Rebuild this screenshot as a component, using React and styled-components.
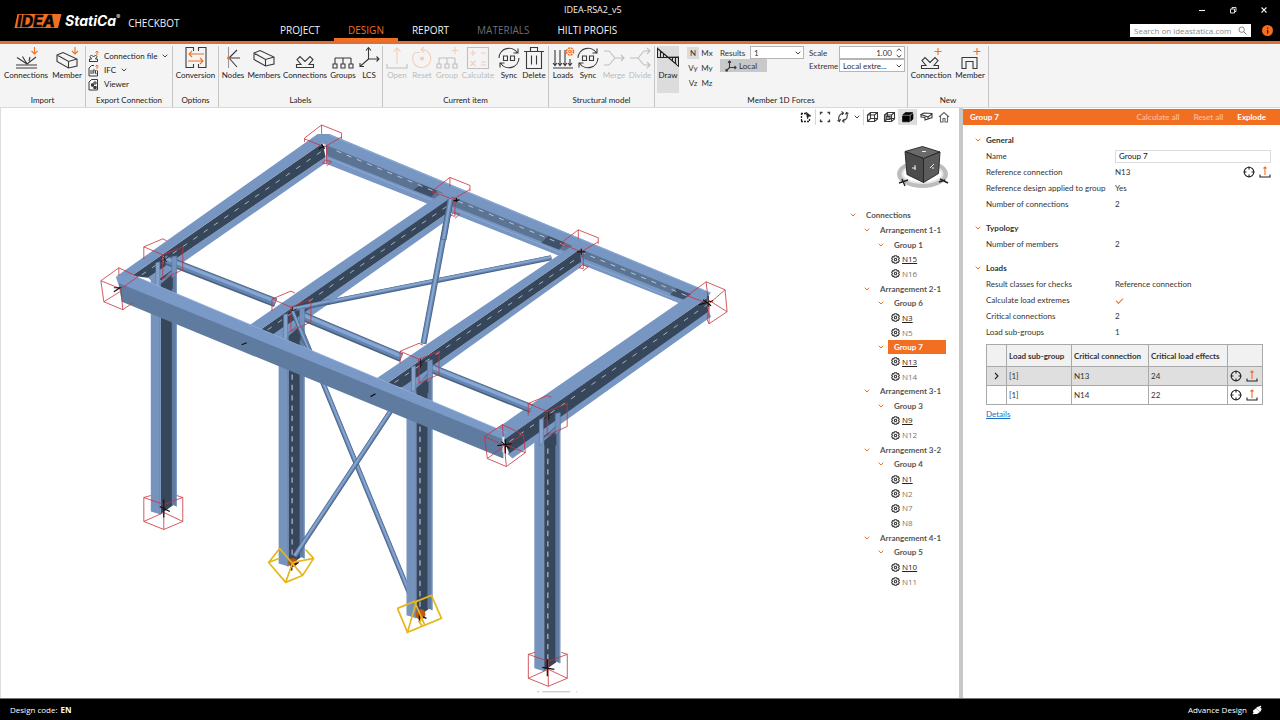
import React from "react";
import styled, { createGlobalStyle } from "styled-components";

const ORANGE = "#f26f21";

const GlobalStyle = createGlobalStyle`
  * {
    box-sizing: border-box;
  }
  body {
    margin: 0;
    font-family: Lato, "Open Sans", sans-serif;
    font-size: 8px;
    line-height: 10px;
    color: #333;
    background: #fff;
  }
  button, input, select {
    font: inherit;
    color: inherit;
    margin: 0;
    padding: 0;
    border: 0;
    background: none;
  }
  svg {
    display: block;
    flex: none;
  }
`;

const Page = styled.div`
  min-height: 100vh;
  display: flex;
  flex-direction: column;
`;

/* ---------- header ---------- */

const Header = styled.header`
  display: grid;
  grid-template-columns: 266px 1fr auto;
  grid-template-rows: 19px 22px;
  background: #000;
  color: #f2f2f2;
  border-bottom: 3px solid #dd6f38;
`;

const Brand = styled.div`
  grid-row: 1 / 3;
  display: flex;
  align-items: center;
  padding-left: 14px;
`;

const BrandName = styled.span`
  font: italic 700 14px/18px Inter, sans-serif;
  margin-left: 3px;
  color: #fff;
`;

const Registered = styled.sup`
  font: 400 6px/6px Inter, sans-serif;
  align-self: flex-start;
  margin-top: 14px;
`;

const Product = styled.span`
  font-family: "Open Sans", sans-serif;
  font-size: 10px;
  line-height: 14px;
  margin: 4px 0 0 8px;
`;

const FileTitle = styled.div`
  font-family: "Open Sans", sans-serif;
  font-size: 9px;
  line-height: 19px;
  padding-left: 298px;
`;

const WindowButtons = styled.div`
  display: flex;
  align-items: center;
  justify-content: flex-end;
  gap: 23px;
  padding-right: 12px;
`;

const PlainButton = styled.button`
  display: flex;
  align-items: center;
  justify-content: center;
`;

const Tabs = styled.nav`
  display: flex;
`;

const Tab = styled.button`
  padding: 3px 14px 0;
  font-family: "Open Sans", sans-serif;
  font-size: 10px;
  line-height: 16px;
  border-bottom: 3px solid ${(p) => (p.$active ? ORANGE : "transparent")};
  color: ${(p) => (p.$active ? ORANGE : p.disabled ? "#6e6e6e" : "#f2f2f2")};
`;

const SearchArea = styled.div`
  display: flex;
  align-items: center;
  gap: 11px;
  padding: 0 7px 0 0;
`;

const SearchBox = styled.label`
  display: flex;
  align-items: center;
  width: 121px;
  height: 13px;
  margin-top: 1px;
  padding: 0 4px;
  background: #fff;

  input {
    flex: 1;
    min-width: 0;
    font-family: "Open Sans", sans-serif;
    outline: none;
  }
  input::placeholder {
    color: #8b8b8b;
    opacity: 1;
  }
`;

/* ---------- ribbon ---------- */

const Ribbon = styled.div`
  display: flex;
  height: 64px;
  padding-top: 2px;
  background: #f4f4f4;
  border-bottom: 1px solid #d8d8d8;
`;

const RibbonGroup = styled.section`
  display: flex;
  flex-direction: column;
  justify-content: space-between;
  flex: none;
  width: ${(p) => p.$width}px;
  border-right: 1px solid #c6c6c6;
`;

const GroupCaption = styled.div`
  text-align: center;
  line-height: 14px;
  color: #222;
`;

const ToolRow = styled.div`
  display: flex;
  padding-left: ${(p) => p.$pad || 0}px;
`;

const Tool = styled.button`
  display: flex;
  flex-direction: column;
  align-items: center;
  flex: none;
  width: ${(p) => p.$width}px;
  color: #222;
  white-space: nowrap;
  opacity: ${(p) => (p.disabled ? 0.28 : 1)};
  background: ${(p) => (p.$pressed ? "#dcdcdc" : "none")};
  height: ${(p) => (p.$pressed ? "47px" : "auto")};
`;

const ExportList = styled.div`
  display: flex;
  flex-direction: column;
  padding: 3px 0 0 2px;
`;

const ExportItem = styled.button`
  display: flex;
  align-items: center;
  gap: 5px;
  height: 14px;
  color: #222;
`;

const ForcesRow = styled.div`
  display: flex;
  align-items: flex-start;
  padding-left: 2px;
`;

const ForceToggles = styled.div`
  display: grid;
  grid-template-columns: 12px 16px;
  grid-auto-rows: 12px;
  row-gap: 3px;
  width: 41px;
  padding: 1px 0 0 8px;
`;

const ForceToggle = styled.button`
  line-height: 12px;
  background: ${(p) => (p.$pressed ? "#dcdcdc" : "none")};
`;

const ForceFields = styled.div`
  display: grid;
  grid-template-columns: ${(p) => p.$label}px ${(p) => p.$field}px;
  grid-auto-rows: 13px;
  align-items: center;
`;

const ScaleFields = styled(ForceFields)`
  margin-left: 5px;
`;

const Control = styled.span`
  display: grid;
  align-items: center;
  height: 13px;
  border: 1px solid #b5b5b5;
  background: #fff;

  > * {
    grid-area: 1 / 1;
    min-width: 0;
  }
  select, input {
    width: 100%;
    appearance: none;
    padding-left: 3px;
    line-height: 10px;
  }
  input {
    padding-right: 12px;
    text-align: right;
  }
  svg {
    justify-self: end;
    margin-right: 2px;
    pointer-events: none;
  }
`;

const LocalButton = styled.button`
  grid-column: 1 / 3;
  display: flex;
  align-items: center;
  gap: 2px;
  width: 47px;
  height: 13px;
  padding-left: 5px;
  background: #c8c8c8;
`;

/* ---------- workspace ---------- */

const Workspace = styled.main`
  flex: 1;
  display: flex;
  border-left: 1px solid #ddd;
`;

const Scene = styled.div`
  flex: 1;
  min-width: 0;

  svg {
    width: 100%;
    height: 100%;
  }
`;

const SceneSide = styled.aside`
  flex: none;
  width: 163px;
  display: flex;
  flex-direction: column;
  align-items: flex-start;
`;

const ViewBar = styled.div`
  display: flex;
  align-items: center;
  height: 18px;
`;

const ViewButton = styled(PlainButton)`
  width: ${(p) => p.$width || 17}px;
  height: 16px;
  border-left: ${(p) => (p.$first ? "1px solid #d6d6d6" : "0")};
  background: ${(p) => (p.$pressed ? "#dedede" : "none")};
`;

const CubeBox = styled.div`
  margin: 16px 0 18px 100px;
`;

const Tree = styled.ul`
  list-style: none;
  margin: 0 0 0 51px;
  padding: 0;
  width: 99px;
  height: 381px;
  display: grid;
  grid-auto-rows: 1fr;
`;

const TreeRow = styled.li`
  display: flex;
  align-items: center;
  padding-left: ${(p) => p.$indent}px;
`;

const TreeBranch = styled.button`
  flex: 1;
  margin-left: 4px;
  padding-left: 6px;
  line-height: 14px;
  text-align: left;
  font-weight: 700;
  white-space: nowrap;
  color: ${(p) => (p.$selected ? "#fff" : "#555")};
  background: ${(p) => (p.$selected ? ORANGE : "none")};
`;

const TreeLeaf = styled.button`
  margin-left: 2px;
  font-family: "Open Sans", sans-serif;
  color: ${(p) => (p.$main ? "#222" : "#777")};
  text-decoration: ${(p) => (p.$main ? "underline" : "none")};
`;

/* ---------- properties panel ---------- */

const Panel = styled.aside`
  flex: none;
  width: 321px;
  border-left: 4px solid #c8c8c8;
  padding-top: 1px;
`;

const PanelHeader = styled.div`
  display: flex;
  align-items: center;
  gap: 14px;
  height: 16px;
  padding: 0 14px 0 7px;
  margin-bottom: 1px;
  background: ${ORANGE};
  color: #fff;
  font-weight: 700;

  h2 {
    flex: 1;
    margin: 0;
    font-size: 8px;
  }
  button:disabled {
    color: #fbb58d;
  }
`;

const PanelBody = styled.div`
  display: flex;
  flex-direction: column;
  gap: 8px;
  padding: 6px 9px 0 12px;
`;

const SectionTitle = styled.h3`
  display: flex;
  align-items: center;
  gap: 5px;
  height: 16px;
  margin: 0;
  font-size: 8px;
  font-weight: 700;
`;

const Field = styled.div`
  display: grid;
  grid-template-columns: 129px 1fr auto;
  align-items: center;
  height: 16px;
  padding-left: 11px;
`;

const NameInput = styled.input`
  grid-column: 2 / 4;
  height: 13px;
  padding-left: 3px;
  border: 1px solid #dcdcdc;
  color: #111;
`;

const Actions = styled.span`
  display: flex;
  align-items: center;
  gap: 4px;
`;

const Check = styled.input`
  appearance: none;
  width: 9px;
  height: 9px;
  display: grid;
  place-items: center;

  &:checked::before {
    content: "";
    width: 6px;
    height: 3px;
    border: solid ${ORANGE};
    border-width: 0 0 1px 1px;
    rotate: -45deg;
  }
`;

const LoadTable = styled.table`
  width: 276px;
  margin: 4px 0 4px 11px;
  border-collapse: collapse;
  table-layout: fixed;

  th, td {
    height: 19px;
    padding: 0 2px;
    border: 1px solid #a9a9a9;
    text-align: left;
    white-space: nowrap;
  }
  th {
    height: 22px;
    background: #f1f1f1;
    font-weight: 700;
  }
`;

const LoadRow = styled.tr`
  background: ${(p) => (p.$selected ? "#dfdfdf" : "#fff")};
`;

const DetailsLink = styled.a`
  margin-left: 11px;
  color: #1a6fc4;
`;

const Footer = styled.footer`
  display: flex;
  justify-content: space-between;
  align-items: center;
  height: 22px;
  padding: 0 18px 0 10px;
  background: #000;
  color: #fff;
  font-family: "Open Sans", sans-serif;
  border-top: 1px solid #777;

  span {
    display: flex;
    align-items: center;
    gap: 5px;
  }
  b {
    margin-left: -2px;
  }
`;

/* ---------- icons ---------- */

const Icon = ({ w = 24, h = 24, children, ...rest }) => (
  <svg
    width={w}
    height={h}
    viewBox={`0 0 ${w} ${h}`}
    fill="none"
    stroke="#3a3a3a"
    strokeWidth="1.1"
    aria-hidden="true"
    {...rest}
  >
    {children}
  </svg>
);

const Chevron = ({ color = "#444" }) => (
  <Icon w={6} h={4} stroke={color} strokeWidth="1">
    <path d="M.7 .7 3 3 5.3 .7" />
  </Icon>
);

const box = "M2 9 8 6.5l14 6.5v7l-8.5 2L2 15.5zM2 9l11.5 6.5 8.5-2.5M13.5 15.5V22";
const joint = "M3.5 21.5h17v-3h-4.5l4-5-3-3-5 5-5-5-3 3 4 5h-4.5z";
const groups = "M2 18h4v4H2zM10 18h4v4h-4zM18 18h4v4h-4zM4 18v-6M12 18v-6M20 18v-6M4 12h16";

const icons = {
  importConnections: (
    <Icon>
      <path d="M2 22h21M2 19h21M13 18 3 11.5M13 18 8.5 10.5M13 18l9-7M15 15l1-4" />
      <path d="M20.5 1v7m-3-3 3 3 3-3" stroke={ORANGE} />
    </Icon>
  ),
  importMember: (
    <Icon>
      <path d={box} />
      <path d="M20 1v7m-3-3 3 3 3-3" stroke={ORANGE} />
    </Icon>
  ),
  conversion: (
    <Icon>
      <path d="M9.5 5V1.5H2v20h7.5V18M14.5 5V1.5H22v20h-7.5V18" />
      <path d="M20 8H5m3-3L5 8l3 3M4 15h15m-3-3 3 3-3 3" stroke={ORANGE} />
    </Icon>
  ),
  nodes: (
    <Icon>
      <path d="M7.5 1v21" stroke="#999" />
      <path d="M8 12h11M8 12l8-8M8 12l8 9" />
      <circle cx="7.5" cy="12" r="1.5" fill={ORANGE} stroke="none" />
    </Icon>
  ),
  members: (
    <Icon>
      <path d={box} transform="translate(0 -2)" />
    </Icon>
  ),
  connections: (
    <Icon>
      <path d={joint} />
    </Icon>
  ),
  groups: (
    <Icon>
      <path d={groups} />
    </Icon>
  ),
  lcs: (
    <Icon>
      <path d="M11.5 2v11M11.5 13H22M11.5 13 3 20.5M9 4.5 11.5 1.5 14 4.5M19.5 10.5 22 13l-2.5 2.5M3 17v3.5h4" />
    </Icon>
  ),
  open: (
    <Icon>
      <path d="M2 18v4h20v-4" />
      <path d="M12 18V2M8.5 5.5 12 2l3.5 3.5" stroke={ORANGE} />
    </Icon>
  ),
  reset: (
    <Icon stroke={ORANGE}>
      <path d="M5 6.5A9 9 0 1 0 12 3.5M5 6.5h5M14 1l-3 2.5 3 3" />
      <circle cx="12" cy="12.5" r="1.5" fill={ORANGE} />
    </Icon>
  ),
  group: (
    <Icon>
      <path d={groups} />
      <path d="M20 1v7M16.5 4.5h7" stroke={ORANGE} />
    </Icon>
  ),
  calculate: (
    <Icon>
      <path d="M1.5 1.5h21v21h-21z" />
      <path d="M4 7h6M7 4v6M15 7h5M4.5 15l5 5M9.5 15l-5 5M15 16h5M15 19h5" stroke={ORANGE} />
    </Icon>
  ),
  sync: (
    <Icon>
      <path d="M2 12A10 10 0 0 1 20.5 7M22 12A10 10 0 0 1 3.5 17M21 2.5V7h-4.5M3 21.5V17h4.5" />
      <path d="M6.5 10h4v4.5h-4zM13.5 10h4v4.5h-4z" />
    </Icon>
  ),
  remove: (
    <Icon>
      <path d="M4.5 6v16.5h15V6M2 5.5h20M8.5 5.5v-4h7v4M9.5 9.5v9M14.5 9.5v9" />
    </Icon>
  ),
  loads: (
    <Icon>
      <path d="M2 22h20M4 4v15M9 4v15M14 4v15M19 13v6M2 17l2 2.5L6 17M7 17l2 2.5 2-2.5M12 17l2 2.5 2-2.5M17 17l2 2.5 2-2.5" />
      <g stroke={ORANGE}>
        <circle cx="19" cy="5.5" r="3.5" strokeDasharray="2 .8" strokeWidth="1.6" />
        <circle cx="19" cy="5.5" r="1.3" />
      </g>
    </Icon>
  ),
  merge: (
    <Icon>
      <path d="M2 5h5l6 7h9M2 19h5l6-7M19 9l3 3-3 3" />
    </Icon>
  ),
  divide: (
    <Icon>
      <path d="M2 12h8l6-7h6M10 12l6 7h6M19 2l3 3-3 3M19 16l3 3-3 3" />
    </Icon>
  ),
  draw: (
    <Icon w={22} stroke="#222">
      <path d="M.5 11.5V2.5L21.5 20v-9zM.5 11.5H21.5M3.5 5v6.5M6.5 7.5v4M9.5 10v1.5M12.5 11.5v1M15.5 11.5V15M18.5 11.5v6" />
    </Icon>
  ),
  newConnection: (
    <Icon>
      <path d={joint} transform="translate(-1 1)" />
      <path d="M19 2v7M15.5 5.5h7" stroke={ORANGE} />
    </Icon>
  ),
  newMember: (
    <Icon>
      <path d="M4 22.5v-11h15v11h-4v-7H8v7z" />
      <path d="M19 2v7M15.5 5.5h7" stroke={ORANGE} />
    </Icon>
  ),
  axes: (
    <Icon w={12} h={12}>
      <path d="M4.5 1v6.5H11M4.5 7.5 1 11M3 2.5 4.5 1 6 2.5M9.5 6 11 7.5 9.5 9M1 9v2h2" />
    </Icon>
  ),
  exportConnection: (
    <Icon w={11} h={13} strokeWidth="1">
      <path d="M1 11.5h8.5M1.5 9h2L2 6.5 3.5 5l2 2 2-2L9 6.5 7.5 9h2v2.5M1.5 9v2.5" />
      <path d="M9 5V1M7.5 2.5 9 1l1.5 1.5" stroke={ORANGE} />
    </Icon>
  ),
  exportIfc: (
    <Icon w={11} h={13} strokeWidth="1">
      <path d="M6 1.5H3.5L1 4v8h8.5V6.5M3 6v4M5 10V6h2M5 8h1.5M8.5 6.5h-1v3h1" />
      <path d="M9 5V1M7.5 2.5 9 1l1.5 1.5" stroke={ORANGE} />
    </Icon>
  ),
  viewer: (
    <Icon w={11} h={13} strokeWidth="1">
      <path d="M3.5 1.5H9.5V12H1V4zM3.5 6h2v2h-2zM6 4h2v2H6zM6 8.5h2v2H6z" />
      <path d="M3.5 6h2v2h-2zM6 8.5h2v2H6z" fill="#3a3a3a" />
    </Icon>
  ),
  target: (
    <Icon w={12} h={12} stroke="#222">
      <circle cx="6" cy="6" r="4.8" />
      <path d="M6 .5v3M6 8.5v3M.5 6h3M8.5 6h3" />
    </Icon>
  ),
  upload: (
    <Icon w={12} h={12} stroke="#222">
      <path d="M1 8.5V11h10V8.5" />
      <path d="M6 9V1M4.5 2.5 6 1l1.5 1.5" stroke={ORANGE} />
    </Icon>
  ),
  gear: (
    <Icon w={9} h={9} strokeWidth="1.1">
      <path d="M3.4 .7h2.2l.4 1.2 1.3-.2 1 1.8-.8 1 .8 1-1 1.8-1.3-.2-.4 1.2H3.4L3 7.1l-1.3.2-1-1.8.8-1-.8-1 1-1.8L3 1.900z" />
      <circle cx="4.5" cy="4.5" r="1.2" />
    </Icon>
  ),
};

const wireCube = "M1.5 4 4.5 1.5h7V8l-3 2.5h-7zM1.5 4h7v6.5M8.5 4l3-2.5M4.5 1.5V7.5h7M4.5 7.5l-3 3";

/* ---------- 3D scene ---------- */

const Tube = ({ c: [x1, y1, x2, y2, w] }) => (
  <g>
    <path d={`M${x1} ${y1}L${x2} ${y2}`} stroke="#4b617f" strokeWidth={w} />
    <path d={`M${x1} ${y1 - 0.5}L${x2} ${y2 - 0.5}`} stroke="#6585b1" strokeWidth={w * 0.75} />
    <path d={`M${x1} ${y1 - w / 6}L${x2} ${y2 - w / 6}`} stroke="#86a7d4" strokeWidth={w * 0.35} />
  </g>
);

const purlins = [
  [163, 259, 276, 303, 9],
  [302, 316, 402, 358, 9],
  [430, 368, 532, 409, 9],
];

// bottom and top are the y of the light flange, axis marks a drawn centre line
const columns = [
  { x: 151, bottom: 512, top: 262, axis: false },
  { x: 279, bottom: 564, top: 314, axis: true },
  { x: 407, bottom: 616, top: 366, axis: true },
  { x: 535, bottom: 669, top: 419, axis: true },
];

const Column = ({ x, bottom, top, axis }) => (
  <g>
    <path d={`M${x} ${top + 18}H${x + 10}V${bottom + 3}L${x} ${bottom}z`} fill="#7593bd" />
    <path d={`M${x + 9} ${top + 4}H${x + 22}V${bottom - 6}L${x + 9} ${bottom + 3}z`} fill="#37475b" />
    <path d={`M${x + 21} ${top - 4}H${x + 26}V${bottom - 5}L${x + 21} ${bottom - 7}z`} fill="#5f7ba2" />
    <path d={`M${x + 25.5} ${top - 4}V${bottom - 5}`} stroke="#7d9ac4" />
    <path d={`M${x + 9.5} ${top + 18}V${bottom + 3}`} stroke="#91aedb" />
    {axis && (
      <path d={`M${x + 13.5} ${top + 30}V${bottom - 3}`} stroke="#9dacbd" strokeWidth="1.4" strokeDasharray="5.3 5" />
    )}
  </g>
);

const ColumnPlates = ({ x, top }) => (
  <g>
    <path d={`M${x + 10} ${top + 20}l12-13v20h-12z`} fill="#37475b" />
    <path d={`M${x + 9} ${top + 20}l13-12v4l-13 11z`} fill="#6d8ab4" />
    <path d={`M${x + 5} ${top + 1}l4-1v24l-4 3z`} fill="#86a3cd" stroke="#5b759a" strokeWidth=".6" />
    <path d={`M${x + 21} ${top - 5}l5-1v18l-5 4z`} fill="#7592bc" stroke="#5b759a" strokeWidth=".6" />
    <path d={`M${x + 10} ${top}l8-5M${x + 12} ${top - 5}l4 5M${x + 14} ${top - 7}v9`} stroke="#222" />
  </g>
);

const rafters = [
  {
    top: "116,277 318,134 330,136 323,143 132,276",
    web: "132,276 323,143 326,157 148,278",
    low: "148,278 326,157 326,163 154,283",
    axis: "M142 275 324 150",
  },
  {
    top: "246,328 443,193 456,193 451,198 258,332",
    web: "258,332 450,197 451,211 273,335",
    low: "273,335 451,211 451,218 281,338",
    axis: "M268 330 451 204",
  },
  {
    top: "375,380 573,246 586,246 580,250 387,384",
    web: "387,384 580,250 582,262 402,388",
    low: "402,388 582,262 582,267 409,391",
    axis: "M395 383 580 257",
  },
  {
    top: "497,429 697,291 711,294 708,298 505,440",
    web: "504,440 708,298 709,312 510,454",
    low: "508,454 709,311 712,317 513,459",
    axis: "M510 442 708 305",
  },
];

const Rafter = ({ top, web, low, axis }) => (
  <g>
    <polygon points={low} fill="#7896c2" />
    <polygon points={web} fill="#37475b" />
    <polygon points={top} fill="#7896c2" />
    <path d={axis} stroke="#c3cdd8" strokeWidth=".8" strokeDasharray="5 7.5" />
  </g>
);

const Model = () => (
  <svg viewBox="1 108 796 590" preserveAspectRatio="xMinYMin meet" fill="none" role="img" aria-label="Steel frame">
    <polygon points="326,145 690,292 684,305 327,164" fill="#7896c2" />
    <polygon points="326,143 693,293 690,301 328,156" fill="#5c7494" />
    <path d="M422 184 438 190 432 197 414 190zM550 235 566 242 560 250 542 243zM678 288 694 294 688 301 671 295z" fill="#3f5169" />
    <polygon points="318,134 330,134 712,293 703,299 324,144" fill="#7896c2" />
    <path d="M330 135 711 293M328 158 685 303" stroke="#91aedb" strokeWidth=".8" />
    <path d="M337 151 690 297" stroke="#c3cdd8" strokeWidth=".9" strokeDasharray="5 6" />

    {/* braces run behind the third column and in front of the second */}
    {columns.slice(0, 2).map((c) => (
      <Column key={c.x} {...c} />
    ))}
    <Tube c={[294, 312, 410, 594, 5]} />
    <Tube c={[295, 557, 416, 374, 5]} />
    {columns.slice(2).map((c) => (
      <Column key={c.x} {...c} />
    ))}

    <Tube c={[292, 310, 552, 258, 5]} />
    <Tube c={[451, 200, 424, 344, 6]} />
    {rafters.map((r) => (
      <Rafter key={r.axis} {...r} />
    ))}
    <Tube c={[451, 200, 444, 240, 6]} />
    <Tube c={[292, 310, 330, 302, 5]} />
    {purlins.map((c) => (
      <Tube key={c[0]} c={c} />
    ))}
    {columns.map((c) => (
      <ColumnPlates key={c.x} {...c} />
    ))}
    <Tube c={[293, 312, 309, 350, 4]} />

    <polygon points="118,281 504,439 504,459 122,302" fill="#5f7b9f" />
    <polygon points="116,277 132,275 507,433 504,440 118,283" fill="#7a99c6" />
    <path d="M132 275 507 433" stroke="#91aedb" strokeWidth=".8" />
    <path d="M504 437v16" stroke="#dce6f2" strokeWidth="2" />

    {/* joint boxes */}
    <g stroke="#c9303a" strokeWidth=".8">
      {[0, 1, 2].map((i) => (
        <path
          key={i}
          transform={`translate(${i * 128.5} ${i * 52.5})`}
          d="M305 142v-4l17-13 20 8v6M322 125v9M305 139l20 8 17-10M327 146v18l-4-1 3-3 6 2-5 4"
        />
      ))}
      {[0, 1, 2, 3].map((i) => (
        <path
          key={i}
          transform={`translate(${i * 128.3} ${i * 52.3})`}
          d="M144 259v-12l19-8 4 2M144 247l19 8 20-8v23l-20 9v-24"
        />
      ))}
      {[0, 385].map((x) => (
        <path
          key={x}
          transform={`translate(${x} ${x ? 157 : 0})`}
          d="M151 496l-7 2v24l20 8 19-8v-24l-6-2M144 498l20 7 19-7M164 505v25M144 522l20-9 19 9"
        />
      ))}
      <path d="M119 268 101 281l3 21 19 8M101 281l20 8 17-12-19-9v8M121 289l2 21 10-7M104 302l16-10" />
      <path d="M707 282l-19 14 22 8 16-14zM726 290l2 22-18 12M710 304v20M707 282l2 18 19 12M710 304l-2 16 2 4" />
      <path d="M503 425 485 437l3 22 19 8 19-14-2-18zM485 437l20 9 19-11M505 446l2 21M503 425l1 12M488 459l16-12M526 453l-20-8" />
    </g>

    <g stroke="#111" strokeWidth="1.2">
      <path d="M319 149l6-3M322 145l3 4M454 201l6-1M457 198v4M578 252l8 0M582 249v6M700 305l14-4M704 300l8 6M709 296v11" />
      <path d="M498 446l14-2M502 442l8 7M506 440v14M114 288h6l-6 4M242 345l5-2M371 397l5-3" />
      <path d="M164 500v18M160 507l10 5M548 660v17M543 668l12 2" />
    </g>

    <g>
      <circle cx="293" cy="563" r="4.5" fill="#b4541b" />
      <circle cx="421" cy="615" r="5" fill="#c25a17" />
      <path d="M292 562v9M294 566l5-3M420 614v9M422 617l5 2" stroke="#111" strokeWidth="1.5" />
    </g>
    <g stroke="#e5b71b" strokeWidth="1.7">
      <path d="M280 549 269 563l17 20 17-7 11-17-8-9M280 549l23 27M269 563l10-4M314 559l-21 4-7 20" />
      <path d="M398 609 415 602 425 625M417 602 432 596l10 23-34 14zM398 609 408 633M423 617l-3 6 3 4" />
    </g>
    <path d="M538 692.5h2M543 692.5h28M577 692.5h1" stroke="#bbb" />
  </svg>
);

const ViewCube = () => (
  <svg width="54" height="48" viewBox="896 142 54 48" fill="none" role="img" aria-label="View cube">
    <ellipse cx="922.5" cy="174" rx="23" ry="11.5" stroke="#bdbdbd" strokeWidth="5" />
    <ellipse cx="922.5" cy="174" rx="20" ry="9" stroke="#e6e6e6" strokeWidth="2" />
    <g stroke="#222" strokeWidth=".9">
      <path d="M905 151.5 922.5 146.5 940 152 923.5 158.5z" fill="#6a6a6a" />
      <path d="M905 151.5 923.5 158.5V182.5L907 174.5z" fill="#4c4c4c" />
      <path d="M940 152 923.5 158.5V182.5L938.5 173.5z" fill="#5b5b5b" />
    </g>
    <path d="M912 168h4M915 165v5M930 168l4-4M932 168h2M922 151.5h4" stroke="#eee" />
    <path d="M899 183l9-3M902 179l3 7M940 179l8 4M939 182l6-2" stroke="#222" strokeWidth="1.4" />
  </svg>
);

/* ---------- data ---------- */

const tree = [
  { level: 0, label: "Connections" },
  { level: 1, label: "Arrangement 1-1" },
  { level: 2, label: "Group 1" },
  { label: "N15", main: true },
  { label: "N16" },
  { level: 1, label: "Arrangement 2-1" },
  { level: 2, label: "Group 6" },
  { label: "N3", main: true },
  { label: "N5" },
  { level: 2, label: "Group 7", selected: true },
  { label: "N13", main: true },
  { label: "N14" },
  { level: 1, label: "Arrangement 3-1" },
  { level: 2, label: "Group 3" },
  { label: "N9", main: true },
  { label: "N12" },
  { level: 1, label: "Arrangement 3-2" },
  { level: 2, label: "Group 4" },
  { label: "N1", main: true },
  { label: "N2" },
  { label: "N7" },
  { label: "N8" },
  { level: 1, label: "Arrangement 4-1" },
  { level: 2, label: "Group 5" },
  { label: "N10", main: true },
  { label: "N11" },
];

const middleGroups = [
  {
    caption: "Labels",
    width: 164,
    pad: 2,
    tools: [
      ["Nodes", "nodes", 24],
      ["Members", "members", 38],
      ["Connections", "connections", 44],
      ["Groups", "groups", 32],
      ["LCS", "lcs", 20],
    ],
  },
  {
    caption: "Current item",
    width: 166,
    pad: 2,
    tools: [
      ["Open", "open", 24, true],
      ["Reset", "reset", 26, true],
      ["Group", "group", 24, true],
      ["Calculate", "calculate", 38, true],
      ["Sync", "sync", 24],
      ["Delete", "remove", 26],
    ],
  },
  {
    caption: "Structural model",
    width: 106,
    pad: 2,
    tools: [
      ["Loads", "loads", 24],
      ["Sync", "sync", 26],
      ["Merge", "merge", 26, true],
      ["Divide", "divide", 26, true],
    ],
  },
];

const ToolGroup = ({ caption, width, pad, tools }) => (
  <RibbonGroup $width={width}>
    <ToolRow $pad={pad}>
      {tools.map(([label, icon, w, disabled]) => (
        <Tool key={label} $width={w} disabled={disabled}>
          {icons[icon]}
          {label}
        </Tool>
      ))}
    </ToolRow>
    <GroupCaption>{caption}</GroupCaption>
  </RibbonGroup>
);

const MemberForces = () => (
  <RibbonGroup $width={253}>
    <ForcesRow>
      <Tool $width={22} $pressed>
        {icons.draw}
        Draw
      </Tool>
      <ForceToggles>
        {["N", "Mx", "Vy", "My", "Vz", "Mz"].map((f) => (
          <ForceToggle key={f} $pressed={f === "N"}>
            {f}
          </ForceToggle>
        ))}
      </ForceToggles>
      <ForceFields $label={30} $field={54}>
        <label htmlFor="results">Results</label>
        <Control>
          <select id="results">
            <option>1</option>
          </select>
          <Chevron />
        </Control>
        <LocalButton>
          {icons.axes}
          Local
        </LocalButton>
      </ForceFields>
      <ScaleFields $label={30} $field={66}>
        <label htmlFor="scale">Scale</label>
        <Control>
          <input id="scale" defaultValue="1.00" />
          <Icon w={6} h={10} strokeWidth="1">
            <path d="M.7 3 3 .8 5.3 3M.7 7 3 9.2 5.3 7" />
          </Icon>
        </Control>
        <label htmlFor="extreme">Extreme</label>
        <Control>
          <select id="extreme">
            <option>Local extre...</option>
          </select>
          <Chevron />
        </Control>
      </ScaleFields>
    </ForcesRow>
    <GroupCaption>Member 1D Forces</GroupCaption>
  </RibbonGroup>
);

const viewButtons = [
  {
    name: "Select",
    width: 19,
    icon: (
      <Icon w={12} h={12} stroke="#222">
        <path d="M1 2.5h5M1.5 2v9M1 10.5h9M9.5 8v3" strokeDasharray="2 1" strokeWidth="1.3" />
        <path d="M6 1l5 4-2.5.5L7.5 8z" fill="#222" strokeWidth=".5" />
      </Icon>
    ),
  },
  {
    name: "Zoom to fit",
    width: 19,
    first: true,
    icon: (
      <Icon w={12} h={12}>
        <path d="M1.5 3.5V1.5H3.5M8.500 1.5h2V3.500M10.5 8.500v2H8.500M3.500 10.5H1.5V8.500" strokeWidth="1.3" />
      </Icon>
    ),
  },
  {
    name: "Rotate",
    width: 17,
    icon: (
      <Icon w={12} h={12}>
        <path d="M2.5 10.500C.5 7 2 3 6.500 2M4.500.5 6.500 2 5 4M.5 9.500l2 1 1-2.500M9.500 1.500c2 3.500.5 7.500-4 8.500M7.500 8 5.500 10l2 1.500M8.500 3.500l1-2 2 1" />
      </Icon>
    ),
  },
  { name: "More", width: 12, icon: <Chevron /> },
  {
    name: "Wireframe",
    width: 18,
    first: true,
    icon: (
      <Icon w={13} h={12}>
        <path d={wireCube} />
      </Icon>
    ),
  },
  {
    name: "Transparent",
    width: 17,
    icon: (
      <Icon w={13} h={12}>
        <path d={wireCube} />
        <path d="M3 5.5h4v3H3z" fill="#999" />
      </Icon>
    ),
  },
  {
    name: "Solid",
    width: 18,
    pressed: true,
    icon: (
      <Icon w={13} h={12} stroke="#000" strokeWidth=".6">
        <path d="M1.5 4.8h7v6h-7zM1.8 3.7l2.7-2.2h7.2L9 3.7zM9.7 4.5l2.3-2V8l-2.3 2.3z" fill="#000" />
      </Icon>
    ),
  },
  {
    name: "Members",
    width: 20,
    first: true,
    icon: (
      <Icon w={13} h={12}>
        <path d="M1 3.5 4 2l8 .5v4L8 8V6zM1 3.5V6l4 .5V9l3-1M1 3.5 8 6l4-3" />
      </Icon>
    ),
  },
  {
    name: "Home",
    width: 16,
    icon: (
      <Icon w={12} h={12} stroke="#666">
        <path d="M1 6l5-4.5L11 6M2.5 5v6H5V7.5h2V11h2.5V5" />
      </Icon>
    ),
  },
];

const loadRows = [
  { group: "[1]", connection: "N13", effects: 24, selected: true },
  { group: "[1]", connection: "N14", effects: 22 },
];

const GoActions = () => (
  <Actions>
    <PlainButton aria-label="Locate">{icons.target}</PlainButton>
    <PlainButton aria-label="Open">{icons.upload}</PlainButton>
  </Actions>
);

const Title = ({ children }) => (
  <SectionTitle>
    <Chevron color={ORANGE} />
    {children}
  </SectionTitle>
);

const Text = ({ label, value, children }) => (
  <Field>
    <span>{label}</span>
    <span>{value}</span>
    {children}
  </Field>
);

const App = () => (
  <Page>
    <GlobalStyle />
    <Header>
      <Brand>
        <svg width="48" height="24" viewBox="0 -4 48 24" role="img" aria-label="IDEA">
          <path d="M3.5 1H47.5L44 15H.5z" fill={ORANGE} />
          <text
            x="3"
            y="14"
            fontFamily="Inter, sans-serif"
            fontStyle="italic"
            fontWeight="700"
            fontSize="16"
            fill="#000"
            stroke="#000"
            strokeWidth=".6"
          >
            IDEA
          </text>
        </svg>
        <BrandName>StatiCa</BrandName>
        <Registered>®</Registered>
        <Product>CHECKBOT</Product>
      </Brand>
      <FileTitle>IDEA-RSA2_v5</FileTitle>
      <WindowButtons>
        <PlainButton aria-label="Minimize">
          <Icon w={8} h={8} stroke="#eee">
            <path d="M1 4.5h6" />
          </Icon>
        </PlainButton>
        <PlainButton aria-label="Restore">
          <Icon w={8} h={8} stroke="#eee">
            <path d="M1.5 3h4v4h-4zM3 3V1.5h4v4H5.5" strokeWidth=".9" />
          </Icon>
        </PlainButton>
        <PlainButton aria-label="Close">
          <Icon w={8} h={8} stroke="#eee">
            <path d="M1.5 1.5l5 5M6.5 1.5l-5 5" />
          </Icon>
        </PlainButton>
      </WindowButtons>
      <Tabs>
        <Tab>PROJECT</Tab>
        <Tab $active>DESIGN</Tab>
        <Tab>REPORT</Tab>
        <Tab disabled>MATERIALS</Tab>
        <Tab>HILTI PROFIS</Tab>
      </Tabs>
      <SearchArea>
        <SearchBox>
          <input aria-label="Search" placeholder="Search on ideastatica.com" />
          <Icon w={9} h={9} stroke="#777" strokeWidth=".9">
            <circle cx="3.7" cy="3.7" r="2.7" />
            <path d="M5.7 5.7 8.5 8.5" />
          </Icon>
        </SearchBox>
        <PlainButton aria-label="Information">
          <Icon w={11} h={11} stroke="none">
            <circle cx="5.5" cy="5.5" r="5.5" fill={ORANGE} />
            <path d="M5 2.5h1.3v1.3H5zM5 5h1.3v3.5H5z" fill="#3a1a06" />
          </Icon>
        </PlainButton>
      </SearchArea>
    </Header>

    <Ribbon>
      <ToolGroup
        caption="Import"
        width={86}
        pad={4}
        tools={[
          ["Connections", "importConnections", 44],
          ["Member", "importMember", 38],
        ]}
      />
      <RibbonGroup $width={87}>
        <ExportList>
          <ExportItem>
            {icons.exportConnection}
            Connection file
            <Chevron />
          </ExportItem>
          <ExportItem>
            {icons.exportIfc}
            IFC
            <Chevron />
          </ExportItem>
          <ExportItem>
            {icons.viewer}
            Viewer
          </ExportItem>
        </ExportList>
        <GroupCaption>Export Connection</GroupCaption>
      </RibbonGroup>
      <ToolGroup caption="Options" width={46} pad={0} tools={[["Conversion", "conversion", 45]]} />
      {middleGroups.map((g) => (
        <ToolGroup key={g.caption} {...g} />
      ))}
      <MemberForces />
      <ToolGroup
        caption="New"
        width={81}
        pad={2}
        tools={[
          ["Connection", "newConnection", 42],
          ["Member", "newMember", 36],
        ]}
      />
    </Ribbon>

    <Workspace>
      <Scene>
        <Model />
      </Scene>
      <SceneSide>
        <ViewBar>
          {viewButtons.map(({ name, width, icon, first, pressed }) => (
            <ViewButton key={name} $width={width} $first={first} $pressed={pressed} aria-label={name}>
              {icon}
            </ViewButton>
          ))}
        </ViewBar>
        <CubeBox>
          <ViewCube />
        </CubeBox>
        <Tree>
          {tree.map(({ level, label, main, selected }) =>
            level === undefined ? (
              <TreeRow key={label} $indent={44}>
                {icons.gear}
                <TreeLeaf $main={main}>{label}</TreeLeaf>
              </TreeRow>
            ) : (
              <TreeRow key={label} $indent={3 + level * 14}>
                <Chevron color={ORANGE} />
                <TreeBranch $selected={selected}>{label}</TreeBranch>
              </TreeRow>
            )
          )}
        </Tree>
      </SceneSide>
      <Panel>
        <PanelHeader>
          <h2>Group 7</h2>
          <button disabled>Calculate all</button>
          <button disabled>Reset all</button>
          <button>Explode</button>
        </PanelHeader>
        <PanelBody>
          <section>
            <Title>General</Title>
            <Field>
              <label htmlFor="name">Name</label>
              <NameInput id="name" defaultValue="Group 7" />
            </Field>
            <Text label="Reference connection" value="N13">
              <GoActions />
            </Text>
            <Text label="Reference design applied to group" value="Yes" />
            <Text label="Number of connections" value="2" />
          </section>
          <section>
            <Title>Typology</Title>
            <Text label="Number of members" value="2" />
          </section>
          <section>
            <Title>Loads</Title>
            <Text label="Result classes for checks" value="Reference connection" />
            <Field>
              <label htmlFor="extremes">Calculate load extremes</label>
              <Check id="extremes" type="checkbox" defaultChecked />
            </Field>
            <Text label="Critical connections" value="2" />
            <Text label="Load sub-groups" value="1" />
            <LoadTable>
              <colgroup>
                <col width="20" />
                <col width="65" />
                <col width="77" />
                <col width="79" />
                <col width="35" />
              </colgroup>
              <thead>
                <tr>
                  <th />
                  <th>Load sub-group</th>
                  <th>Critical connection</th>
                  <th>Critical load effects</th>
                  <th />
                </tr>
              </thead>
              <tbody>
                {loadRows.map((r) => (
                  <LoadRow key={r.connection} $selected={r.selected}>
                    <td>
                      {r.selected && (
                        <Icon w={16} h={8} stroke="#222">
                          <path d="M6 1l3 3-3 3" />
                        </Icon>
                      )}
                    </td>
                    <td>{r.group}</td>
                    <td>{r.connection}</td>
                    <td>{r.effects}</td>
                    <td>
                      <GoActions />
                    </td>
                  </LoadRow>
                ))}
              </tbody>
            </LoadTable>
            <DetailsLink href="#details">Details</DetailsLink>
          </section>
        </PanelBody>
      </Panel>
    </Workspace>

    <Footer>
      <span>
        Design code: <b>EN</b>
      </span>
      <span>
        Advance Design
        <Icon w={10} h={10} stroke="#fff">
          <path d="M1 9l2-2M4 4l3 3-2 1.5H2.5L1.5 6zM5 3l3 3 1-2-2-2zM7 3l2-2" fill="#fff" />
        </Icon>
      </span>
    </Footer>
  </Page>
);

export default App;
